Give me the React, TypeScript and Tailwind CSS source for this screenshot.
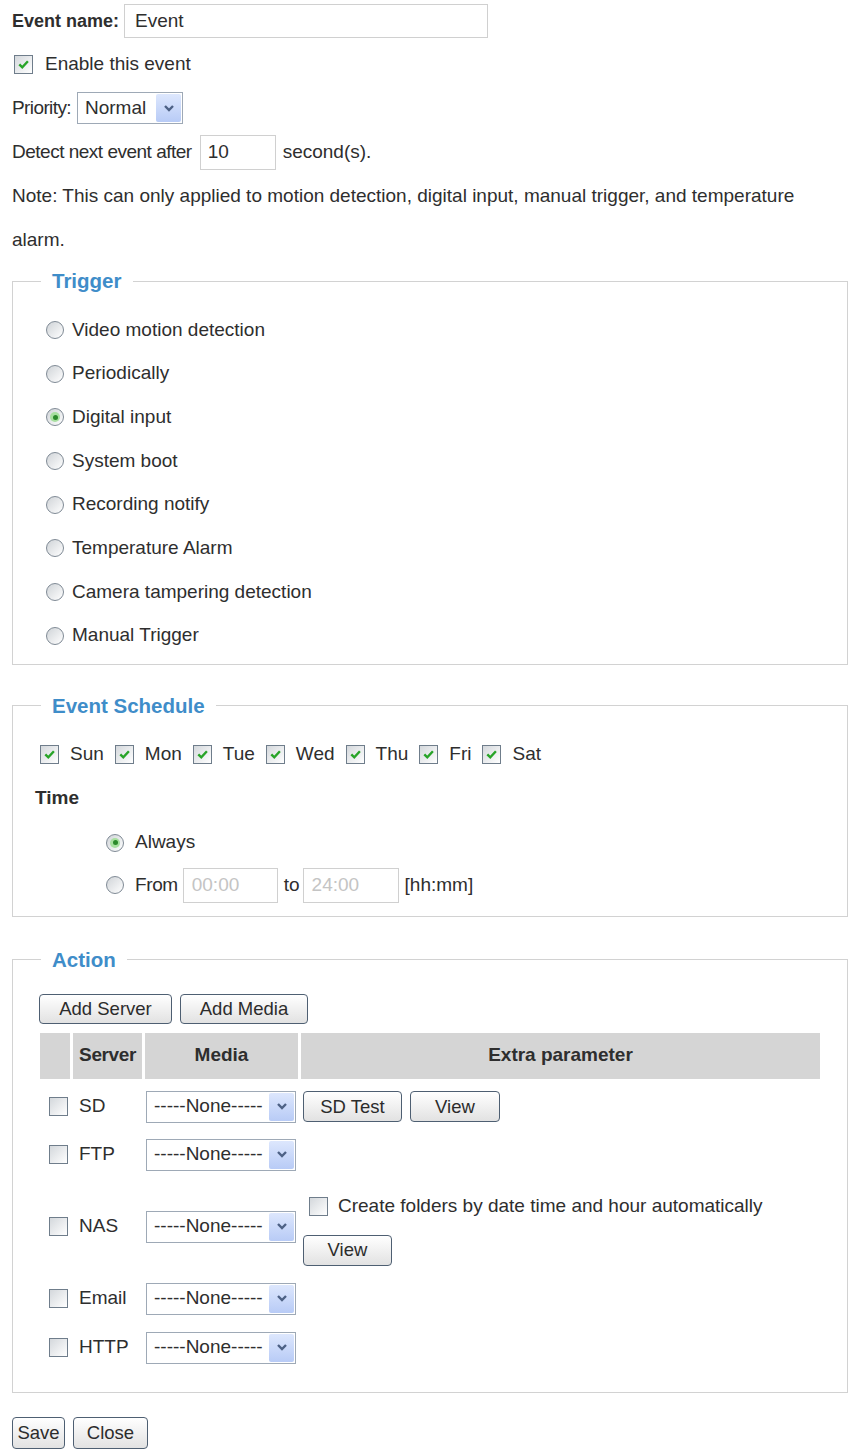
import type { ReactNode } from "react";

function Check({ checked = false }: { checked?: boolean }) {
  return (
    <span className="inline-flex h-[19px] w-[19px] shrink-0 items-center justify-center border border-[#6f7d8b] bg-linear-to-br from-[#d4d8dc] to-white">
      {checked && (
        <svg width="13" height="13" viewBox="0 0 13 13">
          <path d="M2.3 6.3l3 3 5.6-6" stroke="#28a428" strokeWidth="2.4" fill="none" />
        </svg>
      )}
    </span>
  );
}

function Radio({ checked = false }: { checked?: boolean }) {
  return (
    <span className="inline-flex h-[18px] w-[18px] shrink-0 items-center justify-center rounded-full border border-[#7f8a95] bg-linear-to-br from-[#d0d4d8] to-white">
      {checked && (
        <span className="flex h-[10px] w-[10px] items-center justify-center rounded-full bg-[#a8e0a0]">
          <span className="h-[5px] w-[5px] rounded-full bg-[#2b8a2b]" />
        </span>
      )}
    </span>
  );
}

function Select({ value, className }: { value: string; className: string }) {
  return (
    <div className={`flex items-stretch border border-[#9ea9b6] bg-white p-[1px] ${className}`}>
      <span className="flex flex-1 items-center pl-[6px]">{value}</span>
      <span className="flex w-[25px] items-center justify-center rounded-[2px] bg-linear-to-b from-[#dde7fd] to-[#b8cbf6]">
        <svg width="12" height="9" viewBox="0 0 12 9">
          <path d="M2 2l4 4 4-4" stroke="#4d6185" strokeWidth="2.4" fill="none" />
        </svg>
      </span>
    </div>
  );
}

function Btn({ children, className }: { children: ReactNode; className: string }) {
  return (
    <button className={`flex items-center justify-center rounded-[4px] border border-[#4e5f72] bg-linear-to-b from-white to-[#e2e2e2] text-[18.5px] text-[#2c2c2c] ${className}`}>
      {children}
    </button>
  );
}

function Group({ title, className, children }: { title: string; className: string; children: ReactNode }) {
  return (
    <fieldset className={`border border-[#d2d2d2] ${className}`}>
      <legend className="ml-[28px] px-[11px] text-[20.5px] font-bold leading-[24px] text-[#3f8dc9]">
        {title}
      </legend>
      {children}
    </fieldset>
  );
}

const triggers = [
  "Video motion detection",
  "Periodically",
  "Digital input",
  "System boot",
  "Recording notify",
  "Temperature Alarm",
  "Camera tampering detection",
  "Manual Trigger",
];

const days = ["Sun", "Mon", "Tue", "Wed", "Thu", "Fri", "Sat"];

export default function App() {
  return (
    <div className="min-h-[1453px] w-[851px] bg-white pl-[12px] pr-[3px] font-['Liberation_Sans',Arial,sans-serif] text-[19px] text-[#2e2e2e]">
      <div className="flex h-[42px] items-center">
        <span className="text-[18px] font-bold">Event name:</span>
        <div className="ml-[5px] flex h-[34px] w-[364px] items-center border border-[#d0d0d0] px-[10px]">
          Event
        </div>
      </div>
      <div className="flex h-[44px] items-center pl-[2px]">
        <Check checked />
        <span className="ml-[12px]">Enable this event</span>
      </div>
      <div className="flex h-[44px] items-center">
        <span className="tracking-[-0.6px]">Priority:</span>
        <Select value="Normal" className="ml-[6px] h-[32px] w-[106px]" />
      </div>
      <div className="flex h-[44px] items-center">
        <span className="tracking-[-0.5px]">Detect next event after</span>
        <div className="ml-[8px] flex h-[35px] w-[76px] items-center border border-[#d0d0d0] px-[7px]">
          10
        </div>
        <span className="ml-[7px]">second(s).</span>
      </div>
      <div className="flex h-[44px] items-center">
        Note: This can only applied to motion detection, digital input, manual trigger, and temperature
      </div>
      <div className="flex h-[44px] items-center">alarm.</div>

      <Group title="Trigger" className="mt-[7px]">
        <div className="pb-[6px] pl-[33px] pt-[15px]">
          {triggers.map((t, i) => (
            <div key={t} className="flex h-[43.7px] items-center">
              <Radio checked={i === 2} />
              <span className="ml-[8px]">{t}</span>
            </div>
          ))}
        </div>
      </Group>

      <Group title="Event Schedule" className="mt-[29px]">
        <div className="pb-[10px] pt-[15px]">
          <div className="flex h-[44px] items-center pl-[27px]">
            {days.map((d) => (
              <div key={d} className="mr-[11px] flex items-center">
                <Check checked />
                <span className="ml-[11px]">{d}</span>
              </div>
            ))}
          </div>
          <div className="flex h-[44px] items-center pl-[22px] font-bold">Time</div>
          <div className="flex h-[44px] items-center pl-[93px]">
            <Radio checked />
            <span className="ml-[11px]">Always</span>
          </div>
          <div className="flex h-[41px] items-center pl-[93px]">
            <Radio />
            <span className="ml-[11px] tracking-[-0.4px]">From</span>
            <div className="ml-[5px] flex h-[35px] w-[95px] items-center border border-[#d0d0d0] px-[8px] text-[#c4c4c4]">
              00:00
            </div>
            <span className="ml-[6px]">to</span>
            <div className="ml-[3px] flex h-[35px] w-[96px] items-center border border-[#d0d0d0] px-[8px] text-[#c4c4c4]">
              24:00
            </div>
            <span className="ml-[6px]">[hh:mm]</span>
          </div>
        </div>
      </Group>

      <Group title="Action" className="mt-[31px]">
        <div className="pb-[19px] pt-[22px]">
          <div className="flex gap-[8px] pl-[26px]">
            <Btn className="h-[30px] w-[133px]">Add Server</Btn>
            <Btn className="h-[30px] w-[128px]">Add Media</Btn>
          </div>
          <div className="ml-[27px] mt-[9px] w-[780px]">
            <div className="grid h-[46px] grid-cols-[30px_69px_153px_1fr] gap-x-[3px] font-bold">
              <div className="bg-[#d5d5d5]" />
              <div className="flex items-center justify-center bg-[#d5d5d5] tracking-[-0.4px]">Server</div>
              <div className="flex items-center justify-center bg-[#d5d5d5]">Media</div>
              <div className="flex items-center justify-center bg-[#d5d5d5]">Extra parameter</div>
            </div>
            <div className="mt-[4px]">
              {[
                { name: "SD", h: "h-[48px]" },
                { name: "FTP", h: "h-[48px]" },
                { name: "NAS", h: "h-[96px]" },
                { name: "Email", h: "h-[48px]" },
                { name: "HTTP", h: "h-[50px]" },
              ].map((r) => (
                <div key={r.name} className={`grid grid-cols-[30px_69px_153px_1fr] gap-x-[3px] ${r.h}`}>
                  <div className="flex items-center pl-[9px]">
                    <Check />
                  </div>
                  <div className="flex items-center pl-[6px]">{r.name}</div>
                  <div className="flex items-center pl-[1px]">
                    <Select value="-----None-----" className="h-[32px] w-[150px]" />
                  </div>
                  <div className="flex items-center pl-[2px]">
                    {r.name === "SD" && (
                      <div className="flex gap-[8px]">
                        <Btn className="h-[31px] w-[99px]">SD Test</Btn>
                        <Btn className="h-[31px] w-[90px]">View</Btn>
                      </div>
                    )}
                    {r.name === "NAS" && (
                      <div className="flex h-full flex-col pt-[8px]">
                        <div className="flex h-[40px] items-center pl-[6px]">
                          <Check />
                          <span className="ml-[10px]">Create folders by date time and hour automatically</span>
                        </div>
                        <Btn className="mt-[8px] h-[31px] w-[89px]">View</Btn>
                      </div>
                    )}
                  </div>
                </div>
              ))}
            </div>
          </div>
        </div>
      </Group>

      <div className="mt-[24px] flex gap-[8px]">
        <Btn className="h-[32px] w-[53px]">Save</Btn>
        <Btn className="h-[32px] w-[75px]">Close</Btn>
      </div>
    </div>
  );
}
